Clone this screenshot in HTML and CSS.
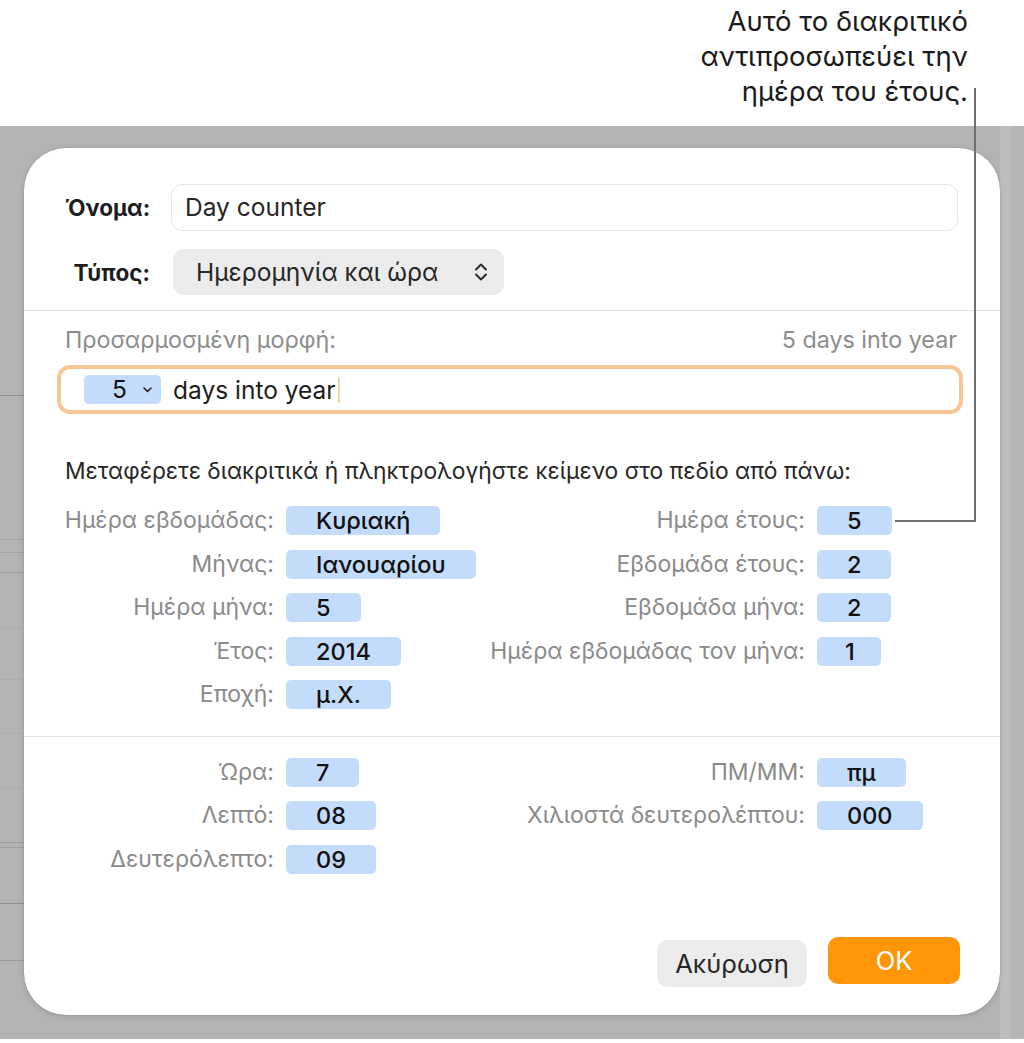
FILE: index.html
```html
<!DOCTYPE html>
<html lang="el">
<head>
  <meta charset="UTF-8">
  <meta name="viewport" content="width=device-width, initial-scale=1.0">
  <title>Προσαρμοσμένη μορφή ημερομηνίας</title>
  <link rel="stylesheet" href="styles.css">
</head>
<body>
  <!-- Callout above the dialog -->
  <div class="callout">
    <p class="callout-text">Αυτό το διακριτικό<br>αντιπροσωπεύει την<br>ημέρα του έτους.</p>
  </div>
  <div class="callout-line"></div>

  <div class="backdrop">
    <div class="dialog">

      <!-- Name and type -->
      <div class="header-fields">
        <label class="field-label">Όνομα:</label>
        <div class="text-field">Day counter</div>
        <label class="field-label">Τύπος:</label>
        <div class="popup">
          <span>Ημερομηνία και ώρα</span>
          <svg class="popup-arrows" width="14" height="20" viewBox="0 0 14 20">
            <path d="M2 7.5 L7 2.5 L12 7.5 M2 12.5 L7 17.5 L12 12.5" fill="none" stroke="#2b2b2b" stroke-width="2" stroke-linecap="round" stroke-linejoin="round"/>
          </svg>
        </div>
      </div>

      <!-- Custom format -->
      <div class="format-section">
        <div class="format-head">
          <span>Προσαρμοσμένη μορφή:</span>
          <span>5 days into year</span>
        </div>
        <div class="format-field">
          <span class="token token-menu">5
            <svg width="9" height="6" viewBox="0 0 9 6">
              <path d="M1 1 L4.5 4.5 L8 1" fill="none" stroke="#1d1d1d" stroke-width="1.5" stroke-linecap="round" stroke-linejoin="round"/>
            </svg>
          </span>
          <span class="format-text">days into year</span>
          <span class="caret"></span>
        </div>

        <p class="hint">Μεταφέρετε διακριτικά ή πληκτρολογήστε κείμενο στο πεδίο από πάνω:</p>

        <div class="token-grid">
          <span class="token-label">Ημέρα εβδομάδας:</span>
          <span class="token">Κυριακή</span>
          <span class="token-label">Ημέρα έτους:</span>
          <span class="token">5</span>

          <span class="token-label">Μήνας:</span>
          <span class="token">Ιανουαρίου</span>
          <span class="token-label">Εβδομάδα έτους:</span>
          <span class="token">2</span>

          <span class="token-label">Ημέρα μήνα:</span>
          <span class="token">5</span>
          <span class="token-label">Εβδομάδα μήνα:</span>
          <span class="token">2</span>

          <span class="token-label">Έτος:</span>
          <span class="token">2014</span>
          <span class="token-label">Ημέρα εβδομάδας τον μήνα:</span>
          <span class="token token-narrow">1</span>

          <span class="token-label">Εποχή:</span>
          <span class="token">μ.Χ.</span>
        </div>
      </div>

      <!-- Time tokens -->
      <div class="time-section">
        <div class="token-grid">
          <span class="token-label">Ώρα:</span>
          <span class="token">7</span>
          <span class="token-label">ΠΜ/ΜΜ:</span>
          <span class="token">πμ</span>

          <span class="token-label">Λεπτό:</span>
          <span class="token">08</span>
          <span class="token-label">Χιλιοστά δευτερολέπτου:</span>
          <span class="token">000</span>

          <span class="token-label">Δευτερόλεπτο:</span>
          <span class="token">09</span>
        </div>
      </div>

      <div class="actions">
        <button class="btn btn-cancel">Ακύρωση</button>
        <button class="btn btn-ok">OK</button>
      </div>
    </div>
  </div>
</body>
</html>
```

FILE: styles.css
```css
/* Page */
body {
  font-family: Inter, "Noto Sans", sans-serif;
  margin: 0;
  padding: 0;
  width: 1024px;
  background-color: #fff;
  color: #1d1d1d;
  position: relative;
}

/* Callout text at the top */
.callout {
  height: 126px;
  display: flex;
  justify-content: flex-end;
  padding-right: 56px;
  box-sizing: border-box;
}

.callout-text {
  margin: 4px 0 0;
  font-size: 27.5px;
  line-height: 35px;
  text-align: right;
  color: #1a1a1a;
}

.callout-line {
  position: absolute;
  left: 895px;
  top: 88px;
  width: 79px;
  height: 432px;
  border-right: 2px solid #6f6f6f;
  border-bottom: 2px solid #6f6f6f;
  z-index: 2;
}

/* Grey window behind the sheet */
.backdrop {
  height: 913px;
  padding: 22px 0 0 24px;
  box-sizing: border-box;
  background:
    linear-gradient(#8e8e8e, #8e8e8e) 0 269px / 24px 1px no-repeat,
    linear-gradient(#a3a3a3, #a3a3a3) 0 413px / 24px 1px no-repeat,
    linear-gradient(#a3a3a3, #a3a3a3) 0 426px / 24px 1px no-repeat,
    linear-gradient(#999, #999) 0 446px / 24px 1px no-repeat,
    linear-gradient(#adadad, #adadad) 0 501px / 24px 1px no-repeat,
    linear-gradient(#adadad, #adadad) 0 553px / 24px 1px no-repeat,
    linear-gradient(#adadad, #adadad) 0 607px / 24px 1px no-repeat,
    linear-gradient(#adadad, #adadad) 0 662px / 24px 1px no-repeat,
    linear-gradient(#9c9c9c, #9c9c9c) 0 716px / 24px 1px no-repeat,
    linear-gradient(#9c9c9c, #9c9c9c) 0 721px / 24px 1px no-repeat,
    linear-gradient(#8e8e8e, #8e8e8e) 0 777px / 24px 1px no-repeat,
    linear-gradient(#9c9c9c, #9c9c9c) 0 834px / 24px 1px no-repeat,
    linear-gradient(to right, #b3b3b3 0, #b3b3b3 1000px, #bfbfbf 1000px, #bdbdbd 1010px, #b5b5b5 1012px),
    linear-gradient(135deg, #c2c2c2 0, #b4b4b4 260px);
  background-color: #b4b4b4;
}

/* The sheet */
.dialog {
  width: 976px;
  height: 867px;
  box-sizing: border-box;
  background-color: #fff;
  border-radius: 42px;
  padding-top: 36px;
  box-shadow: 0 0 1px rgba(0, 0, 0, 0.35), 0 2px 6px rgba(0, 0, 0, 0.12);
  display: flex;
  flex-direction: column;
}

.header-fields {
  display: grid;
  grid-template-columns: 85px 1fr;
  column-gap: 21px;
  row-gap: 18px;
  align-items: center;
  padding: 0 42px 15px 41px;
  border-bottom: 1px solid #e4e4e4;
}

.field-label {
  font-weight: 700;
  font-size: 22.5px;
  text-align: right;
  white-space: nowrap;
  color: #1d1d1d;
}

.text-field {
  height: 47px;
  box-sizing: border-box;
  border: 1px solid #e6e6e6;
  border-radius: 11px;
  padding-left: 13px;
  font-size: 24.5px;
  line-height: 45px;
  color: #262626;
}

.popup {
  justify-self: start;
  width: 331px;
  height: 46px;
  margin-left: 2px;
  box-sizing: border-box;
  background-color: #ebebeb;
  border-radius: 11px;
  padding: 0 16px 0 23px;
  display: flex;
  align-items: center;
  justify-content: space-between;
  font-size: 24.5px;
  color: #262626;
}

/* Custom format area */
.format-section {
  padding: 17px 43px 27px 41px;
  border-bottom: 1px solid #e4e4e4;
}

.format-head {
  display: flex;
  justify-content: space-between;
  font-size: 23.3px;
  line-height: 24px;
  color: #8c8c8c;
}

.format-field {
  margin: 13px -6px 0 -8px;
  height: 49px;
  box-sizing: border-box;
  border: 4px solid #f8c597;
  border-radius: 13px;
  padding-left: 23px;
  display: flex;
  align-items: center;
}

.format-text {
  margin-left: 12px;
  font-size: 24.5px;
  color: #1d1d1d;
}

.caret {
  width: 2px;
  height: 26px;
  margin-left: 2px;
  background-color: #f7cfa9;
}

.hint {
  margin: 44px 0 22px;
  font-size: 22.8px;
  line-height: 26px;
  color: #262626;
}

/* Token grid: label, token, label, token */
.token-grid {
  display: grid;
  grid-template-columns: 250px 190px 317px auto;
  column-gap: 12px;
  row-gap: 14.5px;
  align-items: center;
  margin-left: -41px;
}

.time-section .token-grid {
  margin-left: 0;
}

.time-section {
  padding-top: 20.5px;
}

.token-label {
  font-size: 23px;
  line-height: 29px;
  text-align: right;
  white-space: nowrap;
  color: #8a8a8a;
}

.token {
  justify-self: start;
  height: 29px;
  box-sizing: border-box;
  padding: 0 30px;
  background-color: #c4dcfc;
  border-radius: 5px;
  font-size: 23.5px;
  font-weight: 500;
  line-height: 29px;
  text-align: center;
  color: #111;
}

.token-narrow {
  padding: 0 26px 0 28px;
}

.token-menu {
  display: flex;
  align-items: center;
  gap: 16px;
  padding: 0 8px 0 28px;
  width: 77px;
  font-weight: 400;
  font-size: 24.5px;
}

/* Buttons */
.actions {
  display: flex;
  justify-content: flex-end;
  align-items: flex-start;
  gap: 21px;
  margin-top: auto;
  padding: 0 40px 28px 0;
}

.btn {
  font-family: inherit;
  font-size: 25.5px;
  border: none;
  border-radius: 10px;
  cursor: pointer;
}

.btn-cancel {
  width: 150px;
  height: 47px;
  margin-top: 3px;
  background-color: #ebebeb;
  color: #262626;
}

.btn-ok {
  width: 132px;
  height: 47px;
  background-color: #ff9608;
  color: #fff;
}
```
